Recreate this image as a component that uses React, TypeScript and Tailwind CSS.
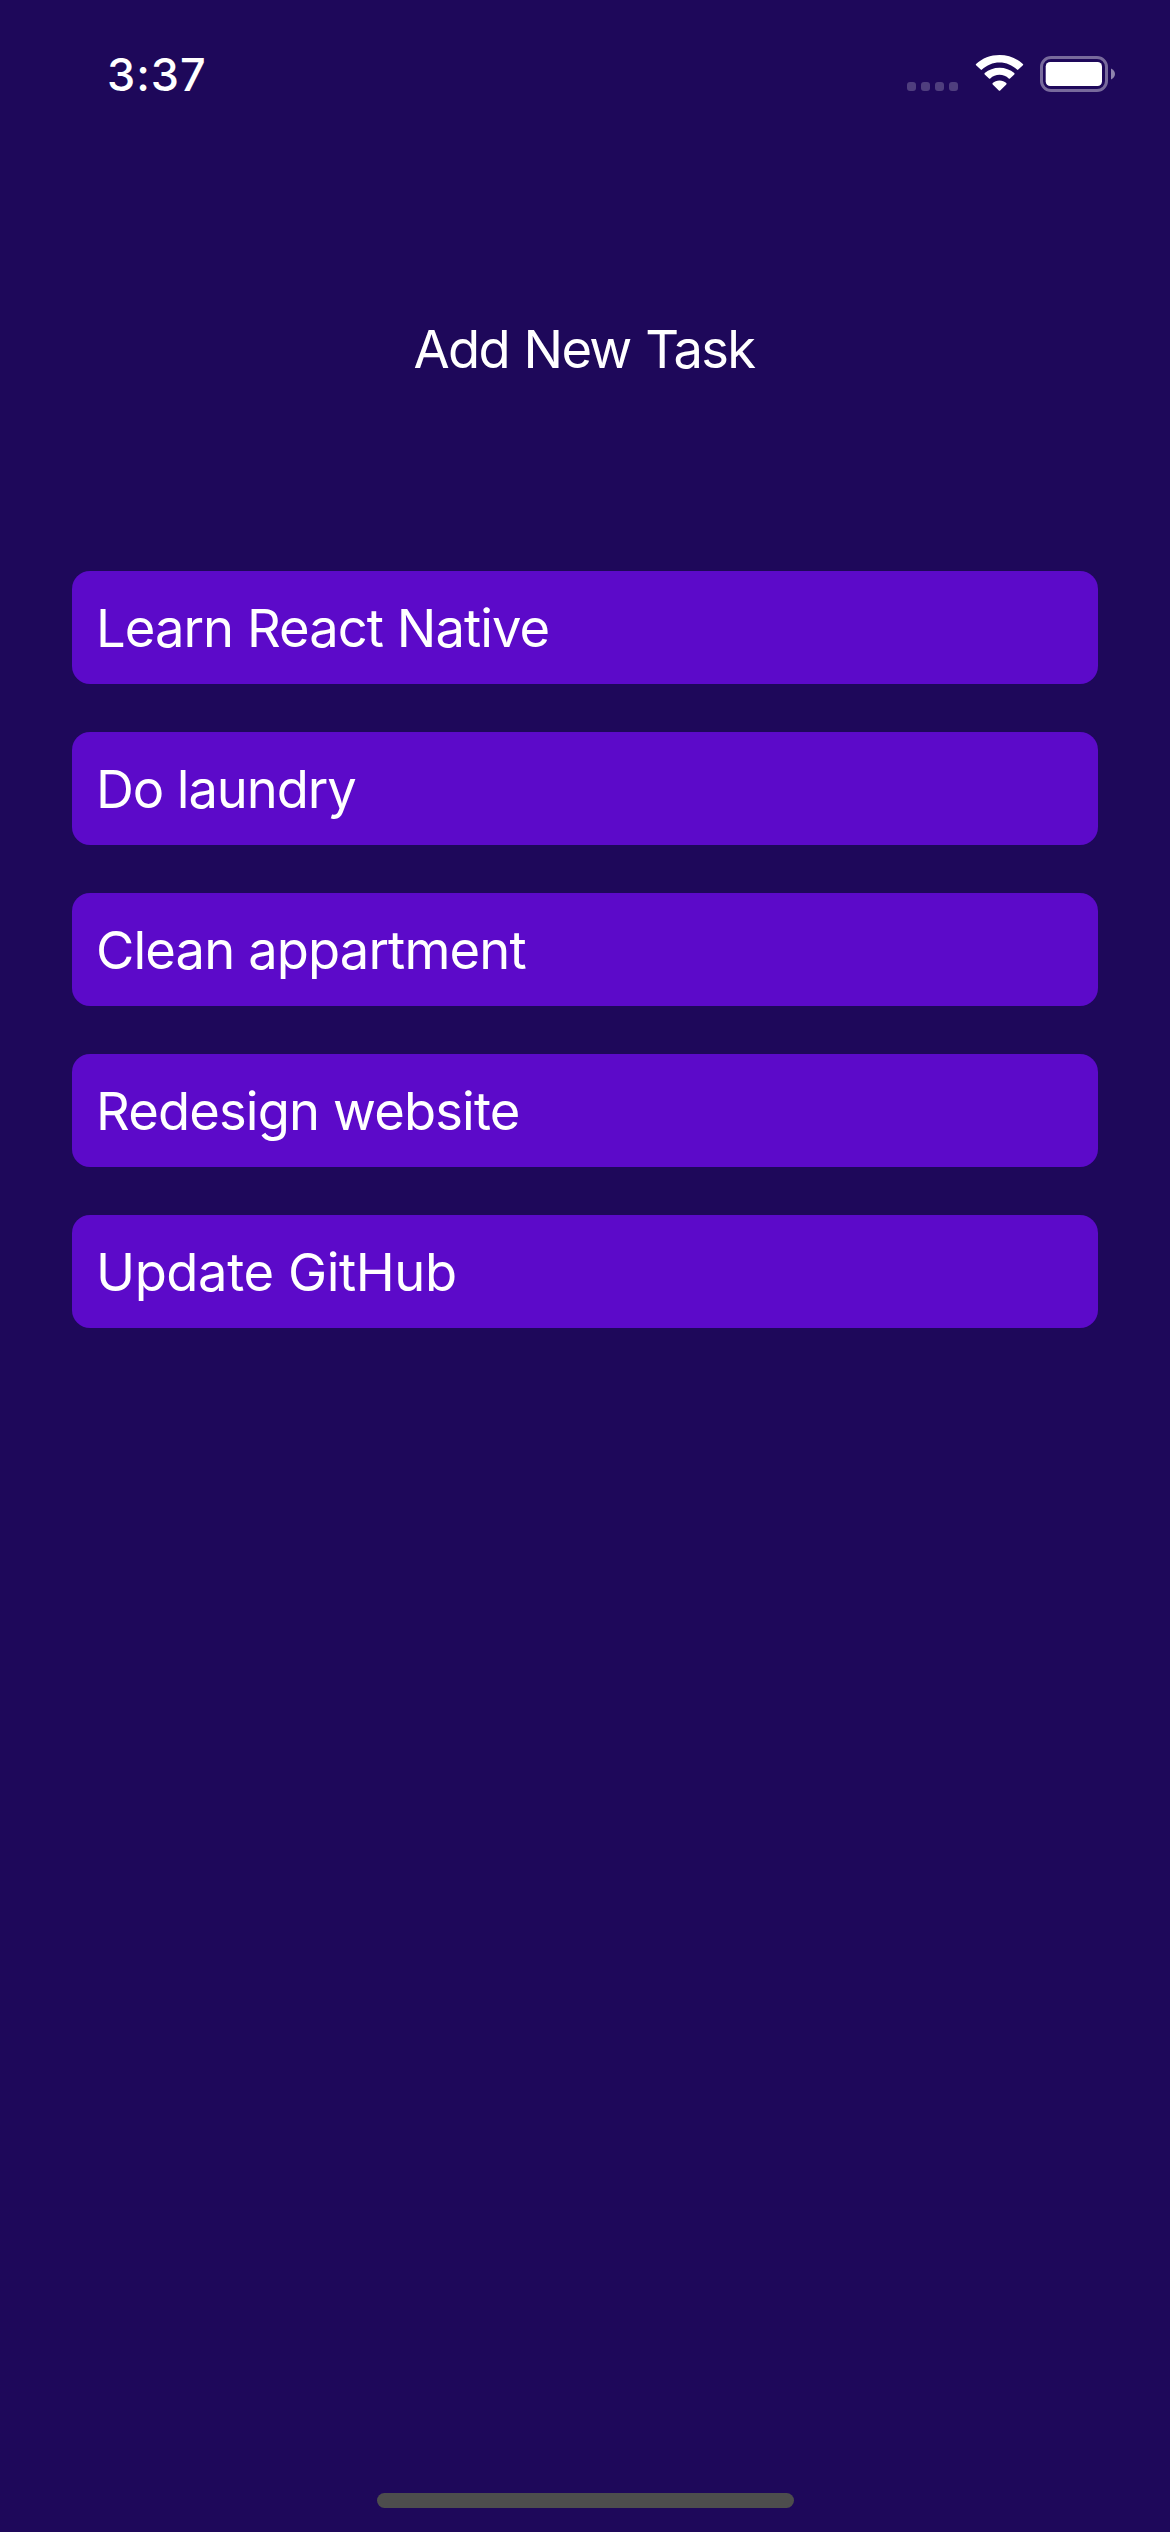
const tasks = [
  { text: "Learn React Native", tracking: "tracking-[-0.95px]" },
  { text: "Do laundry", tracking: "tracking-[-1.1px]" },
  { text: "Clean appartment", tracking: "tracking-[-0.88px]" },
  { text: "Redesign website", tracking: "tracking-[-0.86px]" },
  { text: "Update GitHub", tracking: "tracking-[-0.42px]" },
];

function SignalDots() {
  return (
    <div className="flex gap-[5px] pb-px">
      {[0, 1, 2, 3].map((dot) => (
        <span key={dot} className="size-[9px] rounded-[3px] bg-white/22" />
      ))}
    </div>
  );
}

function WifiIcon() {
  return (
    <svg className="mb-px ml-[17px] h-9 w-[49px]" viewBox="0 0 49 36" fill="#fff">
      <path d="M24.5 7.4c6.7 0 12.9 2.6 17.5 7.2.4.4.9.4 1.3 0l4.6-4.3c.4-.4.4-.9 0-1.3C41.7 3.2 33.4 0 24.5 0S7.3 3.2 1.1 9c-.4.4-.4.9 0 1.3l4.6 4.3c.4.4.9.4 1.3 0C11.6 10 17.800 7.4 24.5 7.4Z" />
      <path d="M24.5 19.8c3.5 0 6.7 1.3 9.2 3.6.4.4.9.4 1.3 0l4.3-4c.4-.4.4-.9 0-1.3C35.3 14.6 30.1 12.7 24.5 12.7s-10.8 1.9-14.8 5.4c-.4.4-.4.9 0 1.3l4.3 4c.4.4.9.4 1.3 0 2.5-2.3 5.7-3.6 9.2-3.6Z" />
      <path d="M31.3 28.1c.4.4.4.9 0 1.3l-6.1 6c-.4.4-1 .4-1.4 0l-6.1-6c-.4-.4-.4-.9 0-1.3 1.8-1.7 4.1-2.6 6.8-2.6s5 .9 6.800 2.6Z" />
    </svg>
  );
}

function BatteryIcon() {
  return (
    <svg className="ml-4 h-9 w-[75px]" viewBox="0 0 75 36">
      <rect x="1.5" y="1.5" width="65" height="33" rx="9.5" fill="none" stroke="#fff" strokeOpacity="0.4" strokeWidth="3" />
      <rect x="5.7" y="6" width="56.3" height="24" rx="4.5" fill="#fff" />
      <path d="M71 12.5c2.4 1 4 3.1 4 5.5s-1.6 4.5-4 5.5Z" fill="#fff" fillOpacity="0.5" />
    </svg>
  );
}

export default function App() {
  return (
    <div className="flex h-[2532px] w-[1170px] flex-col bg-[#1e085a] font-['Inter',sans-serif] text-[52.5px] text-white">
      <header className="flex h-[147px] items-center justify-between pr-[55px] pl-[107px]">
        <span className="pt-[2px] text-[45px] leading-[54px] font-medium tracking-[1px]">3:37</span>
        <div className="flex h-[37px] items-end">
          <SignalDots />
          <WifiIcon />
          <BatteryIcon />
        </div>
      </header>

      <h1 className="mt-[170px] pr-[2px] text-center leading-[64px] tracking-[-1.7px] [word-spacing:1.5px]">
        Add New Task
      </h1>

      <ul className="mt-[190px] flex flex-col gap-12 px-[72px]">
        {tasks.map((task) => (
          <li
            key={task.text}
            className={`flex h-[113px] items-center rounded-[18px] bg-[#5c0ac9] px-6 leading-[64px] ${task.tracking}`}
          >
            {task.text}
          </li>
        ))}
      </ul>

      <div className="mt-auto mb-6 h-[15px] w-[417px] self-center rounded-full bg-[#4d4d4d]" />
    </div>
  );
}
